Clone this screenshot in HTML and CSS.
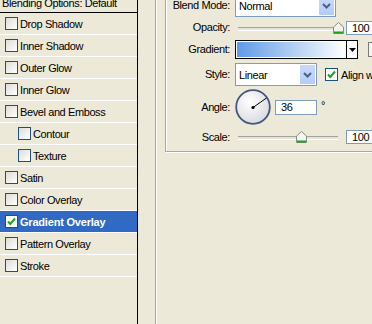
FILE: index.html
```html
<!DOCTYPE html>
<html lang="en">
<head>
    <meta charset="UTF-8">
    <title>Layer Style - Gradient Overlay</title>
    <link rel="stylesheet" href="styles.css">
</head>
<body>
    <aside class="styles-list">
        <div class="list-title">Blending Options: Default</div>
        <ul>
            <li><span class="check"></span>Drop Shadow</li>
            <li><span class="check"></span>Inner Shadow</li>
            <li><span class="check"></span>Outer Glow</li>
            <li><span class="check"></span>Inner Glow</li>
            <li><span class="check"></span>Bevel and Emboss</li>
            <li class="sub"><span class="check"></span>Contour</li>
            <li class="sub"><span class="check"></span>Texture</li>
            <li><span class="check"></span>Satin</li>
            <li><span class="check"></span>Color Overlay</li>
            <li class="active"><span class="check checked"><svg width="11" height="11" viewBox="0 0 11 11"><path d="M2 5.5L4.3 8L9 2.5" fill="none" stroke="#21a121" stroke-width="2"/></svg></span>Gradient Overlay</li>
            <li><span class="check"></span>Pattern Overlay</li>
            <li><span class="check"></span>Stroke</li>
        </ul>
    </aside>

    <main class="panel">
        <div class="group">
            <div class="field f-blend">
                <label>Blend Mode:</label>
                <div class="select wide">
                    <span>Normal</span>
                    <span class="drop"><svg width="9" height="6" viewBox="0 0 9 6"><polyline points="1,1 4.5,4.5 8,1" fill="none" stroke="#4d6185" stroke-width="2"/></svg></span>
                </div>
            </div>

            <div class="field f-opacity">
                <label>Opacity:</label>
                <div class="slider">
                    <div class="track"></div>
                    <span class="thumb" style="left: 100%"><svg width="11" height="12" viewBox="0 0 11 12"><path d="M0.5 11.5V5L5.5 0.5L10.5 5V11.5Z" fill="#f4f4f0" stroke="#8a8a86"/><path d="M1 10.5H10" stroke="#21a121" stroke-width="2"/></svg></span>
                </div>
                <div class="num">100</div>
            </div>

            <div class="field f-gradient">
                <label>Gradient:</label>
                <div class="gradient">
                    <div class="fill"></div>
                    <div class="arrow"><svg width="7" height="4" viewBox="0 0 7 4"><polygon points="0,0 7,0 3.5,4" fill="#000"/></svg></div>
                </div>
                <span class="reverse"></span>
            </div>

            <div class="field f-style">
                <label>Style:</label>
                <div class="select narrow">
                    <span>Linear</span>
                    <span class="drop"><svg width="9" height="6" viewBox="0 0 9 6"><polyline points="1,1 4.5,4.5 8,1" fill="none" stroke="#4d6185" stroke-width="2"/></svg></span>
                </div>
                <span class="check align-check"><svg width="11" height="11" viewBox="0 0 11 11"><path d="M2 5.5L4.3 8L9 2.5" fill="none" stroke="#21a121" stroke-width="2"/></svg></span>
                <span class="align-text">Align with Layer</span>
            </div>

            <div class="field f-angle">
                <label>Angle:</label>
                <svg class="dial" width="36" height="36" viewBox="0 0 36 36">
                    <defs>
                        <radialGradient id="dialFill" cx="40%" cy="35%" r="70%">
                            <stop offset="0" stop-color="#ffffff"/>
                            <stop offset="1" stop-color="#d8d9de"/>
                        </radialGradient>
                    </defs>
                    <circle cx="18" cy="18" r="16.8" fill="url(#dialFill)" stroke="#44577f" stroke-width="1.8"/>
                    <line x1="18" y1="18.5" x2="31.5" y2="9" stroke="#000" stroke-width="1"/>
                    <circle cx="18" cy="18.5" r="1.6" fill="#000"/>
                </svg>
                <div class="num angle">36</div>
                <span class="deg">°</span>
            </div>

            <div class="field f-scale">
                <label>Scale:</label>
                <div class="slider">
                    <div class="track"></div>
                    <span class="thumb" style="left: 63%"><svg width="11" height="12" viewBox="0 0 11 12"><path d="M0.5 11.5V5L5.5 0.5L10.5 5V11.5Z" fill="#f4f4f0" stroke="#8a8a86"/><path d="M1 10.5H10" stroke="#21a121" stroke-width="2"/></svg></span>
                </div>
                <div class="num">100</div>
            </div>
        </div>
    </main>
</body>
</html>
```

FILE: styles.css
```css
* {
    box-sizing: border-box;
}

html {
    overflow: hidden;
}

body {
    margin: 0;
    height: 324px;
    overflow: hidden;
    display: flex;
    background-color: #ece9d8;
    color: #000;
    font-family: "Liberation Sans", Arial, sans-serif;
    font-size: 11px;
    letter-spacing: -0.4px;
}

/* left list of effects */
.styles-list {
    width: 138px;
    flex-shrink: 0;
    border-right: 1px solid #000;
}

.list-title {
    margin-top: -6px;
    height: 19px;
    line-height: 18px;
    padding-left: 2px;
    border-bottom: 1px solid #000;
}

.styles-list ul {
    list-style: none;
    margin: 0;
    padding: 0;
}

.styles-list li {
    height: 22px;
    display: flex;
    align-items: center;
    padding-left: 5px;
    border-bottom: 1px solid #fff;
}

.styles-list li.sub {
    padding-left: 18px;
}

.styles-list li.active {
    background-color: #316ac5;
    color: #fff;
    font-weight: bold;
    letter-spacing: -0.2px;
}

.check {
    width: 13px;
    height: 13px;
    margin-right: 2px;
    flex-shrink: 0;
    display: flex;
    align-items: center;
    justify-content: center;
    border: 1px solid #1c5180;
    background: linear-gradient(135deg, #dcdcd7, #ffffff);
}

.check.checked {
    background: #fff;
}

/* right options panel */
.panel {
    flex: 1;
    min-width: 0;
    margin-left: 17px;
    padding-left: 9px;
    border-left: 1px solid #aca899;
    box-shadow: inset 1px 0 #fff;
}

.group {
    width: 300px;
    margin-top: -20px;
    padding: 13px 0 7px 0;
    border: 1px solid #aca899;
    box-shadow: 1px 1px 0 #fff, inset 1px 1px 0 #fff;
}

.field {
    display: flex;
    align-items: center;
}

.field label {
    width: 64px;
    margin-right: 5px;
    padding-bottom: 2px;
    text-align: right;
    flex-shrink: 0;
}

.f-blend {
    height: 23px;
}

.f-opacity {
    height: 14px;
    margin-top: 4px;
}

.f-gradient {
    height: 19px;
    margin-top: 5px;
}

.f-style {
    height: 23px;
    margin-top: 4px;
}

.f-angle {
    height: 36px;
    margin-top: 3px;
}

.f-angle label,
.f-scale label {
    padding-bottom: 0;
}

.f-scale {
    height: 14px;
    margin-top: 5px;
}

.select {
    height: 23px;
    display: flex;
    align-items: center;
    padding-left: 3px;
    border: 1px solid #7f9db9;
    background: #fff;
}

.select.wide {
    width: 101px;
}

.select.narrow {
    width: 82px;
}

.drop {
    width: 15px;
    height: 19px;
    margin-left: auto;
    margin-right: 1px;
    display: flex;
    align-items: center;
    justify-content: center;
    border-radius: 1px;
    background: linear-gradient(#c9dafc, #b4cbfa);
}

.slider {
    position: relative;
    width: 100px;
    height: 14px;
    margin-left: 3px;
    margin-right: 8px;
    display: flex;
    align-items: center;
}

.slider .track {
    width: 100%;
    height: 4px;
    margin-top: 1px;
    border-top: 1px solid #a3a29c;
    border-bottom: 1px solid #fff;
    background: #e6e4da;
}

.slider .thumb {
    position: absolute;
    top: 1px;
    margin-left: -5px;
    line-height: 0;
}

.num {
    width: 40px;
    height: 14px;
    padding-left: 5px;
    line-height: 12px;
    border: 1px solid #7f9db9;
    background: #fff;
}

.num.angle {
    width: 42px;
    height: 15px;
    margin-left: 4px;
    line-height: 13px;
}

.deg {
    margin-left: 4px;
    margin-bottom: 4px;
}

.gradient {
    width: 123px;
    height: 19px;
    display: flex;
    border: 1px solid #000;
}

.gradient .fill {
    flex: 1;
    border: 1px solid #fff;
    background: linear-gradient(to right, #5f9ae6, #ffffff);
}

.gradient .arrow {
    width: 11px;
    display: flex;
    align-items: center;
    justify-content: center;
    border-left: 1px solid #000;
    background: #fff;
}

.reverse {
    width: 13px;
    height: 15px;
    margin-left: 10px;
    border: 1px solid #7a7a76;
    background: #f5f4ef;
}

.align-check {
    margin-left: 8px;
    background: #fff;
}

.align-text {
    margin-left: 1px;
    white-space: nowrap;
}

.dial {
    display: block;
}
```
